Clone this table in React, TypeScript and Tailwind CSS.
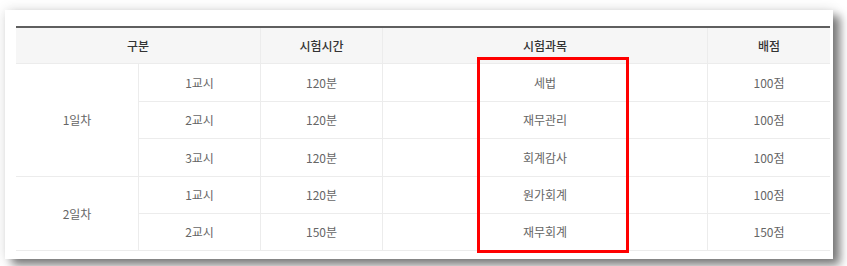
import React from "react";

const font = { fontFamily: '"Noto Sans CJK KR", "Noto Sans", sans-serif' };

type Row = { day?: string; span?: number; period: string; time: string; subject: string; score: string };

const rows: Row[] = [
  { day: "1일차", span: 3, period: "1교시", time: "120분", subject: "세법", score: "100점" },
  { period: "2교시", time: "120분", subject: "재무관리", score: "100점" },
  { period: "3교시", time: "120분", subject: "회계감사", score: "100점" },
  { day: "2일차", span: 2, period: "1교시", time: "120분", subject: "원가회계", score: "100점" },
  { period: "2교시", time: "150분", subject: "재무회계", score: "150점" },
];

const cell = "flex items-center justify-center border-b border-[#ececec] text-[12px] text-[#666]";

export default function App() {
  return (
    <div className="w-[847px] h-[266px] bg-white overflow-hidden" style={font}>
      <div className="ml-[5px] mt-[10px] w-[828px] h-[249px] bg-white pt-[16px] pl-[11px] shadow-[7px_6px_9px_rgba(0,0,0,0.5),0_0_12px_rgba(0,0,0,0.12)]">
        <div className="relative w-[814px] border-t-2 border-[#5f5f5f]">
          <div className="grid grid-cols-[122px_122px_122px_325px_123px] grid-rows-[36px_38px_37px_38px_37px_37px]">
            <div className="col-span-2 flex items-center justify-center bg-[#f6f6f6] border-b border-[#ececec] text-[12px] font-medium text-[#333]">구분</div>
            <div className="flex items-center justify-center bg-[#f6f6f6] border-b border-l border-[#ececec] text-[12px] font-medium text-[#333]">시험시간</div>
            <div className="flex items-center justify-center bg-[#f6f6f6] border-b border-l border-[#ececec] text-[12px] font-medium text-[#333]">시험과목</div>
            <div className="flex items-center justify-center bg-[#f6f6f6] border-b border-l border-[#ececec] text-[12px] font-medium text-[#333]">배점</div>
            {rows.map((r, i) => (
              <React.Fragment key={i}>
                {r.day && (
                  <div className={`${cell} ${r.span === 3 ? "row-span-3" : "row-span-2"}`}>{r.day}</div>
                )}
                <div className={`${cell} border-l`}>{r.period}</div>
                <div className={`${cell} border-l`}>{r.time}</div>
                <div className={`${cell} border-l`}>{r.subject}</div>
                <div className={`${cell} border-l`}>{r.score}</div>
              </React.Fragment>
            ))}
          </div>
          <div className="absolute left-[461px] top-[29px] w-[152px] h-[196px] border-[3px] border-[#ff0000]" />
        </div>
      </div>
    </div>
  );
}
